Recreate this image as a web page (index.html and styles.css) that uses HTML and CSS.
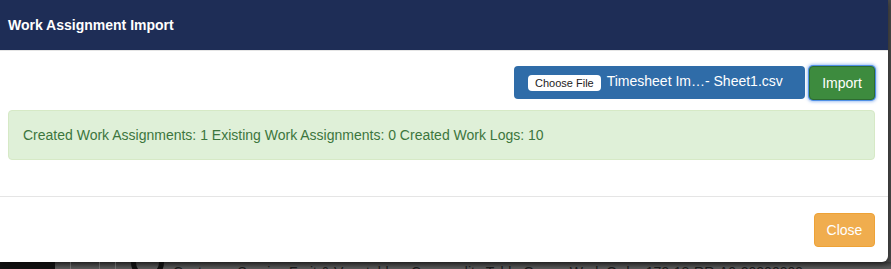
FILE: index.html
```html
<!DOCTYPE html>
<html lang="en">
<head>
  <meta charset="UTF-8" />
  <title>Work Assignment Import</title>
  <link rel="stylesheet" href="styles.css">
</head>
<body>

  <div class="modal">
    <div class="modal-header">
      <h4 class="modal-title">Work Assignment Import</h4>
    </div>

    <div class="modal-body">
      <div class="import-row">
        <div class="file-group">
          <span class="file-btn">Choose File</span>
          <span class="file-name">Timesheet Im…- Sheet1.csv</span>
        </div>
        <button class="btn btn-import">Import</button>
      </div>

      <div class="alert-success">
        Created Work Assignments: 1 Existing Work Assignments: 0 Created Work Logs: 10
      </div>
    </div>

    <div class="modal-footer">
      <button class="btn btn-close">Close</button>
    </div>
  </div>

  <div class="behind">
    <div class="behind-side"></div>
    <div class="behind-cell"></div>
    <div class="behind-cell wide"></div>
    <div class="behind-cell"></div>
    <div class="behind-icon"></div>
    <div class="behind-text">Customer:Sunrise Fruit &amp; Vegetables, Commodity:Table Grape, Work Order:179-18-RR-A0-20200309</div>
  </div>

</body>
</html>
```

FILE: styles.css
```css
html, body {
  margin: 0;
  padding: 0;
  height: 100%;
  overflow: hidden;
}

body {
  font-family: "Liberation Sans", Arial, Helvetica, sans-serif;
  background-color: #4a4a4a;
}

.modal {
  width: 888px;
  height: 262px;
  background-color: #fff;
  border-radius: 0 0 6px 0;
  display: flex;
  flex-direction: column;
  box-shadow: 0 2px 6px rgba(0, 0, 0, 0.5);
  position: relative;
  z-index: 1;
}

.modal-header {
  height: 50px;
  background-color: #1e2d56;
  border-bottom: 1px solid #e5e5e5;
  display: flex;
  align-items: center;
  padding: 0 8px;
}

.modal-title {
  margin: 0;
  color: #fff;
  font-size: 14px;
  font-weight: bold;
}

.modal-body {
  padding: 15px 13px 0 8px;
  height: 130px;
}

.import-row {
  display: flex;
  justify-content: flex-end;
  gap: 4px;
}

.file-group {
  width: 291px;
  height: 33px;
  box-sizing: border-box;
  background-color: #2f6ca8;
  border-radius: 4px;
  display: flex;
  align-items: center;
  padding-left: 14px;
  gap: 6px;
}

.file-btn {
  background-color: #fff;
  color: #222;
  font-size: 11px;
  padding: 2px 7px;
  border-radius: 4px;
  line-height: 12px;
}

.file-name {
  color: #fff;
  font-size: 14px;
  margin-top: -3px;
}

.btn {
  font-family: inherit;
  font-size: 14px;
  color: #fff;
  border: 1px solid transparent;
  border-radius: 4px;
  cursor: pointer;
}

.btn-import {
  width: 66px;
  height: 34px;
  background-color: #3d8b3e;
  border-color: #2d6b30;
  box-shadow: 0 0 0 1px #4f8fe6, 0 0 3px 2px rgba(80, 140, 230, 0.5);
}

.alert-success {
  margin-top: 10px;
  background-color: #dff0d8;
  border: 1px solid #d6e9c6;
  border-radius: 4px;
  color: #3c763d;
  font-size: 14px;
  line-height: 20px;
  padding: 14px 14px;
}

.modal-footer {
  border-top: 1px solid #e5e5e5;
  flex: 1;
  display: flex;
  justify-content: flex-end;
  align-items: center;
  padding: 0 13px 0 8px;
}

.btn-close {
  width: 61px;
  height: 34px;
  background-color: #f0ad4e;
  border-color: #eea236;
}

.behind {
  display: flex;
  height: 30px;
  background: linear-gradient(#3a3a3a, #5a5a5a 6px);
  align-items: flex-start;
}

.behind-side {
  width: 55px;
  height: 100%;
  background-color: #121212;
}

.behind-cell {
  width: 15px;
  height: 100%;
  border-right: 1px solid #777;
}

.behind-cell.wide {
  width: 28px;
}

.behind-icon {
  width: 23px;
  height: 23px;
  margin: -16px 9px 0 15px;
  border: 5px solid #111;
  border-radius: 50%;
}

.behind-text {
  color: #1a1a1a;
  font-size: 14px;
  white-space: nowrap;
  margin-top: 2px;
}
```
